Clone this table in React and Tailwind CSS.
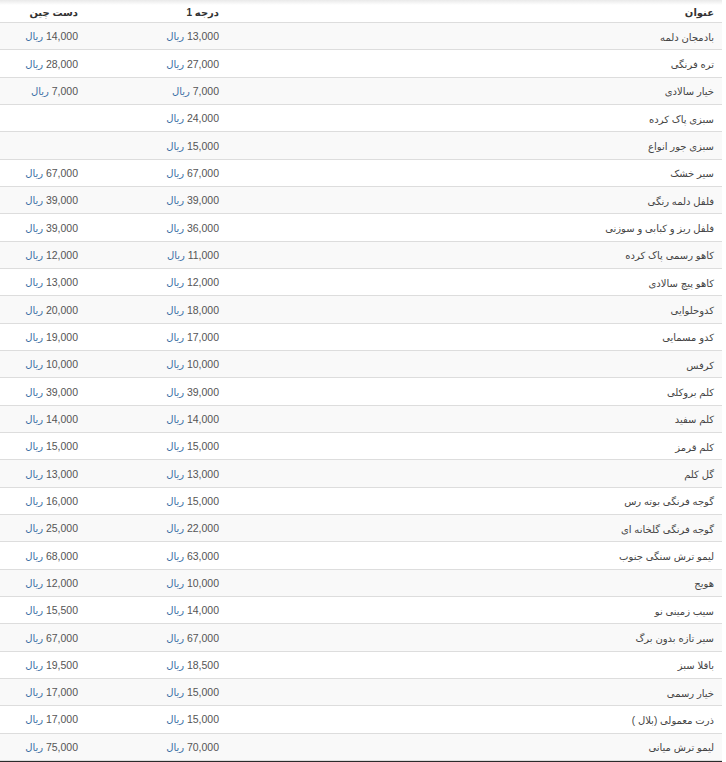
const rows = [
    ["بادمجان دلمه", "13,000", "14,000"],
    ["تره فرنگی", "27,000", "28,000"],
    ["خیار سالادی", "7,000", "7,000"],
    ["سبزی پاک کرده", "24,000", ""],
    ["سبزی جور انواع", "15,000", ""],
    ["سیر خشک", "67,000", "67,000"],
    ["فلفل دلمه رنگی", "39,000", "39,000"],
    ["فلفل ریز و کبابی و سوزنی", "36,000", "39,000"],
    ["کاهو رسمی پاک کرده", "11,000", "12,000"],
    ["کاهو پیچ سالادی", "12,000", "13,000"],
    ["کدوحلوایی", "18,000", "20,000"],
    ["کدو مسمایی", "17,000", "19,000"],
    ["کرفس", "10,000", "10,000"],
    ["کلم بروکلی", "39,000", "39,000"],
    ["کلم سفید", "14,000", "14,000"],
    ["کلم قرمز", "15,000", "15,000"],
    ["گل کلم", "13,000", "13,000"],
    ["گوجه فرنگی بوته رس", "15,000", "16,000"],
    ["گوجه فرنگی گلخانه ای", "22,000", "25,000"],
    ["لیمو ترش سنگی جنوب", "63,000", "68,000"],
    ["هویج", "10,000", "12,000"],
    ["سیب زمینی نو", "14,000", "15,500"],
    ["سیر تازه بدون برگ", "67,000", "67,000"],
    ["باقلا سبز", "18,500", "19,500"],
    ["خیار رسمی", "15,000", "17,000"],
    ["ذرت معمولی (بلال )", "15,000", "17,000"],
    ["لیمو ترش میانی", "70,000", "75,000"],
];

const Price = ({ value }) =>
    value ? (
        <span>
            <span className="text-[10.5px]">{value}</span> <span className="text-[#3a6ea5]">ریال</span>
        </span>
    ) : null;

const App = () => {
    return (
        <div className="w-[726px] h-[762px] overflow-hidden bg-white font-['Liberation_Sans','DejaVu_Sans',sans-serif] text-[10px] text-[#555]">
            <div dir="rtl" className="w-[722px]">
                {/* Header */}
                <div className="grid grid-cols-[495px_141px_86px] h-[23px] items-center border-b border-[#ddd] bg-[linear-gradient(to_bottom,#e9e9e9_0px,#ffffff_5px)] font-bold text-[#333] pt-[2px]">
                    <div className="px-2">عنوان</div>
                    <div className="px-2">درجه 1</div>
                    <div className="px-2">دست چین</div>
                </div>

                {/* Rows */}
                {rows.map(([title, g1, picked], i) => (
                    <div
                        key={i}
                        className={`grid grid-cols-[495px_141px_86px] h-[27.33px] items-center border-b border-[#ddd] pt-[2px] ${i % 2 === 0 ? "bg-[#f9f9f9]" : "bg-white"}`}
                    >
                        <div className="px-2 text-[#444]">{title}</div>
                        <div className="px-2"><Price value={g1} /></div>
                        <div className="px-2"><Price value={picked} /></div>
                    </div>
                ))}
            </div>
            <div className="h-[3px] w-[722px] bg-[#2b2b2b]"></div>
        </div>
    );
};

export default App;
